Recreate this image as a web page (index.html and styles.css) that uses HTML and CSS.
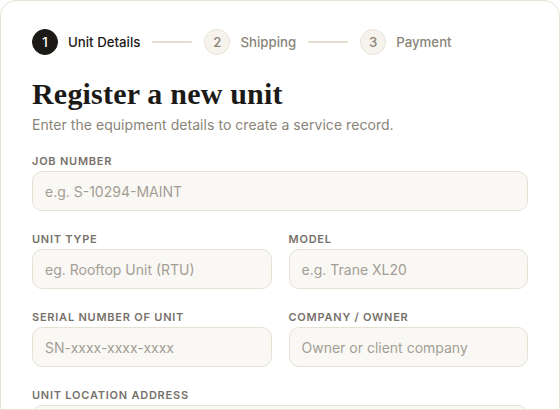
FILE: index.html
```html
<!DOCTYPE html>
<html lang="en">
<head>
<meta charset="utf-8">
<title>Register a new unit</title>
<link rel="stylesheet" href="styles.css">
</head>
<body>
<main class="card">
  <ol class="stepper">
    <li class="step step--active"><span class="step-num">1</span><span class="step-label">Unit Details</span></li>
    <li class="step-line" aria-hidden="true"></li>
    <li class="step"><span class="step-num">2</span><span class="step-label">Shipping</span></li>
    <li class="step-line" aria-hidden="true"></li>
    <li class="step"><span class="step-num">3</span><span class="step-label">Payment</span></li>
  </ol>

  <h1 class="title">Register a new unit</h1>
  <p class="subtitle">Enter the equipment details to create a service record.</p>

  <form class="form">
    <div class="field field--full">
      <label class="label" for="job">Job Number</label>
      <input class="input" id="job" type="text" placeholder="e.g. S-10294-MAINT">
    </div>
    <div class="field">
      <label class="label" for="type">Unit Type</label>
      <input class="input" id="type" type="text" placeholder="eg. Rooftop Unit (RTU)">
    </div>
    <div class="field">
      <label class="label" for="model">Model</label>
      <input class="input" id="model" type="text" placeholder="e.g. Trane XL20">
    </div>
    <div class="field">
      <label class="label" for="serial">Serial Number of Unit</label>
      <input class="input" id="serial" type="text" placeholder="SN-xxxx-xxxx-xxxx">
    </div>
    <div class="field">
      <label class="label" for="company">Company / Owner</label>
      <input class="input" id="company" type="text" placeholder="Owner or client company">
    </div>
    <div class="field field--full">
      <label class="label" for="address">Unit Location Address</label>
      <input class="input" id="address" type="text">
    </div>
  </form>
</main>
</body>
</html>
```

FILE: styles.css
```css
* {
  box-sizing: border-box;
}

html,
body {
  margin: 0;
  background: #ffffff;
}

body {
  font-family: Inter, "Noto Sans", sans-serif;
  color: #1c1a17;
  width: 560px;
  height: 410px;
  overflow: hidden;
}

.card {
  width: 560px;
  height: 410px;
  border: 1px solid #e6e2d5;
  border-radius: 16px 16px 0 0;
  background: #ffffff;
  padding: 28px 31px 0;
  overflow: hidden;
}

/* Step indicator */
.stepper {
  list-style: none;
  margin: 0;
  padding: 0;
  display: flex;
  align-items: center;
  gap: 12px;
}

.step {
  display: flex;
  align-items: center;
  gap: 10px;
}

.step-num {
  width: 26px;
  height: 26px;
  border-radius: 50%;
  display: flex;
  align-items: center;
  justify-content: center;
  font-size: 13.25px;
  font-weight: 500;
  background: #f6f3ec;
  border: 1px solid #e8e3d7;
  color: #8a8478;
}

.step-label {
  font-size: 13.25px;
  font-weight: 500;
  color: #8a8478;
}

.step--active .step-num {
  background: #1c1a17;
  border-color: #1c1a17;
  color: #ffffff;
}

.step--active .step-label {
  color: #1c1a17;
}

.step-line {
  width: 40px;
  height: 2px;
  background: #e2ddcf;
  border-radius: 1px;
}

/* Heading */
.title {
  margin: 21px 0 0;
  font-family: "Liberation Serif", "DejaVu Serif", serif;
  font-size: 30px;
  font-weight: 700;
  line-height: 36px;
  letter-spacing: 0.2px;
  color: #1c1a17;
}

.subtitle {
  margin: 3px 0 0;
  font-size: 14px;
  line-height: 20px;
  letter-spacing: 0.05px;
  color: #8a8478;
}

/* Form grid */
.form {
  margin-top: 18px;
  display: grid;
  grid-template-columns: 1fr 1fr;
  column-gap: 17px;
  row-gap: 20px;
}

.field {
  display: flex;
  flex-direction: column;
  gap: 2px;
  min-width: 0;
}

.field--full {
  grid-column: 1 / -1;
}

.label {
  font-size: 11px;
  line-height: 16px;
  font-weight: 600;
  letter-spacing: 0.07em;
  text-transform: uppercase;
  color: #77716a;
}

.input {
  width: 100%;
  height: 40px;
  border: 1px solid #e6e1d5;
  border-radius: 10px;
  background: #faf8f4;
  padding: 0 12px;
  font-family: inherit;
  font-size: 14px;
  color: #1c1a17;
  outline: none;
}

.input::placeholder {
  color: #a39e94;
}
```
